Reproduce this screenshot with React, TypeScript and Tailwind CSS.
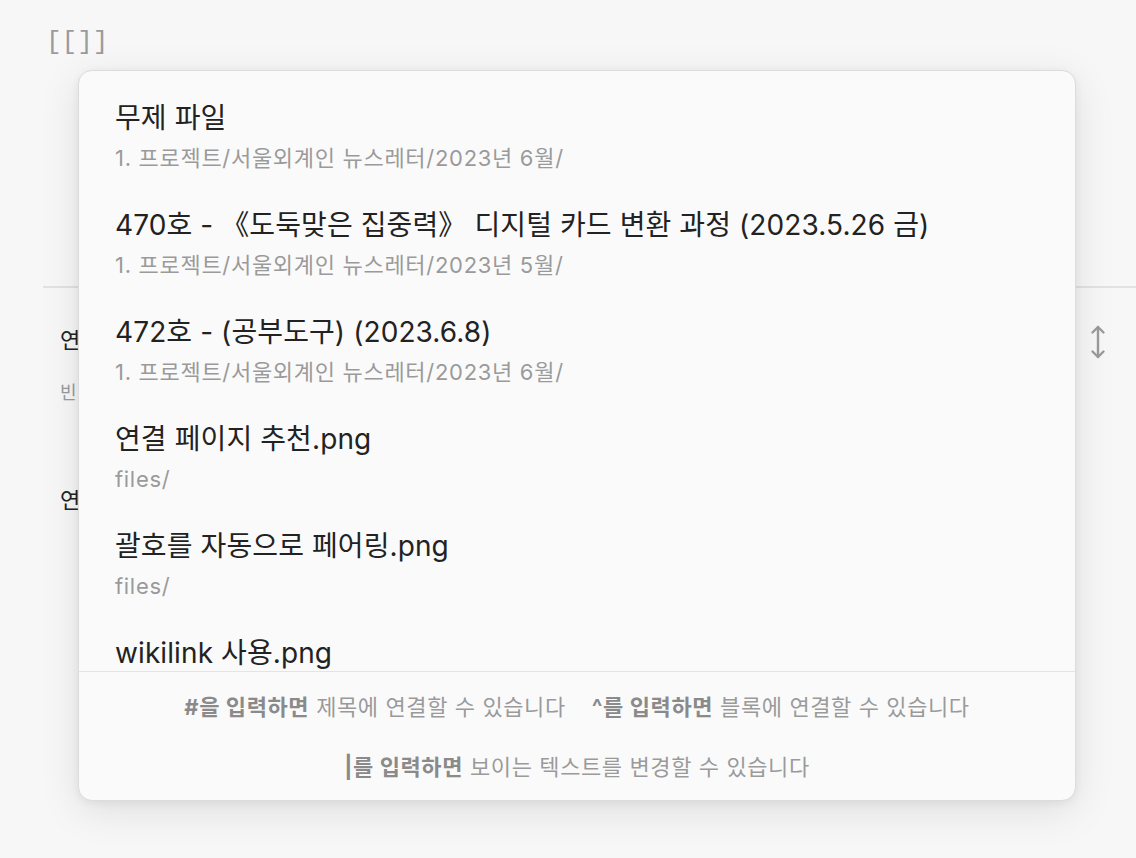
import React from "react";

const items = [
  { title: "무제 파일", path: "1. 프로젝트/서울외계인 뉴스레터/2023년 6월/" },
  {
    title: "470호 - 《도둑맞은 집중력》 디지털 카드 변환 과정 (2023.5.26 금)",
    path: "1. 프로젝트/서울외계인 뉴스레터/2023년 5월/",
  },
  { title: "472호 - (공부도구) (2023.6.8)", path: "1. 프로젝트/서울외계인 뉴스레터/2023년 6월/" },
  { title: "연결 페이지 추천.png", path: "files/" },
  { title: "괄호를 자동으로 페어링.png", path: "files/" },
  { title: "wikilink 사용.png", path: "files/" },
];

const font = "font-['Inter','Noto_Sans_CJK_KR',sans-serif]";

function Hint({ keyText, rest }: { keyText: string; rest: string }) {
  return (
    <span className="whitespace-nowrap">
      <span className="font-bold text-[#8a8a8a]">{keyText}</span>
      <span className="ml-[7px] text-[#9a9a9a]">{rest}</span>
    </span>
  );
}

export default function App() {
  return (
    <div className={`relative h-[858px] w-full overflow-hidden bg-[#f7f7f7] ${font}`}>
      {/* Editor underneath */}
      <div className="pt-[24px] pl-[46px] font-['Liberation_Mono',monospace] text-[26px] leading-[36px] text-[#9a9aa0]">
        [[]]
      </div>
      <div className="ml-[43px] mt-[226px] border-t-2 border-[#e2e2e2]" />
      <div className="flex items-start justify-between pl-[60px] pr-[30px]">
        <div className="pt-[37px]">
          <div className="text-[22px] leading-[30px] text-[#222]">연결</div>
          <div className="mt-[25px] text-[18px] leading-[26px] text-[#9a9aa0]">빈</div>
          <div className="mt-[79px] text-[22px] leading-[30px] text-[#222]">연결</div>
        </div>
        <svg width="16" height="36" viewBox="0 0 16 36" className="mt-[36px]" fill="none" stroke="#9a9a9a" strokeWidth="2.4" strokeLinecap="round" strokeLinejoin="round">
          <path d="M8 3v30" />
          <path d="M2.5 8.5 8 3l5.5 5.5" />
          <path d="M2.5 27.5 8 33l5.5-5.5" />
        </svg>
      </div>

      {/* Suggestion popup */}
      <div className="absolute left-[78px] top-[70px] flex h-[731px] w-[998px] flex-col overflow-hidden rounded-[14px] border border-[#dcdcdc] bg-[#fafafa] shadow-[0_10px_40px_rgba(0,0,0,0.10),0_2px_8px_rgba(0,0,0,0.06)]">
        <div className="h-[600px] overflow-hidden pt-3">
          {items.map((it) => (
            <div key={it.title} className="px-[36px] pt-[16px] pb-[17px]">
              <div className="text-[28px] leading-[38px] tracking-[0.1px] text-[#222]">{it.title}</div>
              <div className="mt-[6px] text-[22px] leading-[30px] tracking-[0.7px] text-[#9a9a9a]">{it.path}</div>
            </div>
          ))}
        </div>
        <div className="flex flex-1 flex-col items-center gap-[30px] border-t border-[#e4e4e4] pt-[20px] text-[22px] leading-[30px] tracking-[0.6px]">
          <div className="flex gap-[26px]">
            <Hint keyText="#을 입력하면" rest="제목에 연결할 수 있습니다" />
            <Hint keyText="^를 입력하면" rest="블록에 연결할 수 있습니다" />
          </div>
          <div className="flex">
            <Hint keyText="|를 입력하면" rest="보이는 텍스트를 변경할 수 있습니다" />
          </div>
        </div>
      </div>
    </div>
  );
}
